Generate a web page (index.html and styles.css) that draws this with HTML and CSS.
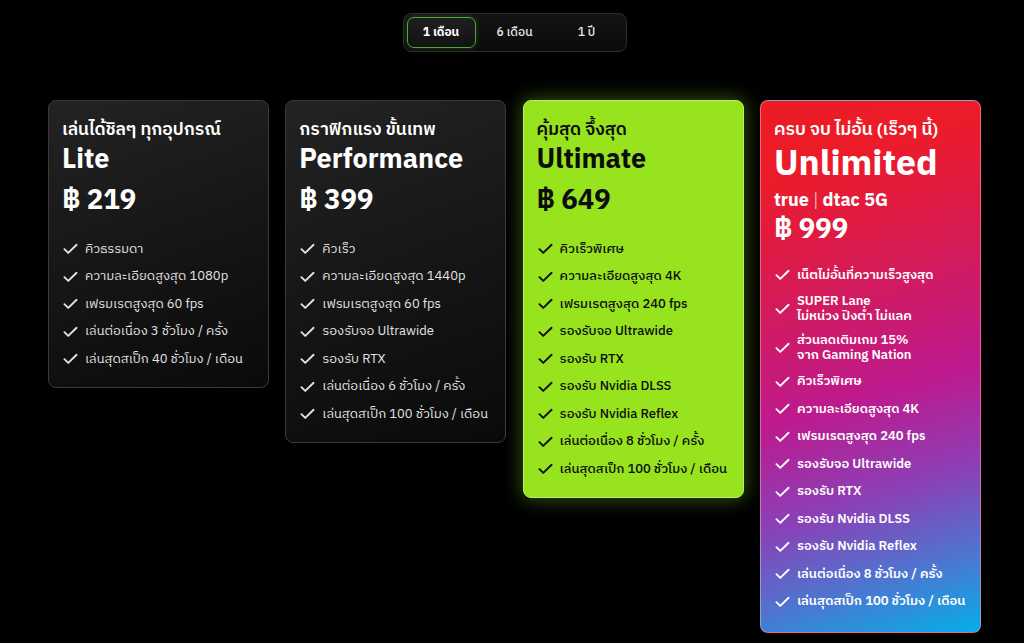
FILE: index.html
```html
<!DOCTYPE html>
<html lang="th">
<head>
<meta charset="utf-8">
<title>Plans</title>
<link rel="stylesheet" href="styles.css">
</head>
<body>
<div class="page">
  <div class="toggle">
    <button class="tab active">1 เดือน</button>
    <button class="tab">6 เดือน</button>
    <button class="tab">1 ปี</button>
  </div>

  <div class="plans">
    <div class="card dark">
      <div class="sub">เล่นได้ชิลๆ ทุกอุปกรณ์</div>
      <div class="name">Lite</div>
      <div class="price">฿ 219</div>
      <ul class="feats">
        <li><svg class="ck" viewBox="0 0 16 12"><path d="M1.5 6.2 5.6 10.2 14.5 1.5"/></svg><span>คิวธรรมดา</span></li>
        <li><svg class="ck" viewBox="0 0 16 12"><path d="M1.5 6.2 5.6 10.2 14.5 1.5"/></svg><span>ความละเอียดสูงสุด 1080p</span></li>
        <li><svg class="ck" viewBox="0 0 16 12"><path d="M1.5 6.2 5.6 10.2 14.5 1.5"/></svg><span>เฟรมเรตสูงสุด 60 fps</span></li>
        <li><svg class="ck" viewBox="0 0 16 12"><path d="M1.5 6.2 5.6 10.2 14.5 1.5"/></svg><span>เล่นต่อเนื่อง 3 ชั่วโมง / ครั้ง</span></li>
        <li><svg class="ck" viewBox="0 0 16 12"><path d="M1.5 6.2 5.6 10.2 14.5 1.5"/></svg><span>เล่นสุดสเป็ก 40 ชั่วโมง / เดือน</span></li>
      </ul>
    </div>

    <div class="card dark">
      <div class="sub">กราฟิกแรง ขั้นเทพ</div>
      <div class="name">Performance</div>
      <div class="price">฿ 399</div>
      <ul class="feats">
        <li><svg class="ck" viewBox="0 0 16 12"><path d="M1.5 6.2 5.6 10.2 14.5 1.5"/></svg><span>คิวเร็ว</span></li>
        <li><svg class="ck" viewBox="0 0 16 12"><path d="M1.5 6.2 5.6 10.2 14.5 1.5"/></svg><span>ความละเอียดสูงสุด 1440p</span></li>
        <li><svg class="ck" viewBox="0 0 16 12"><path d="M1.5 6.2 5.6 10.2 14.5 1.5"/></svg><span>เฟรมเรตสูงสุด 60 fps</span></li>
        <li><svg class="ck" viewBox="0 0 16 12"><path d="M1.5 6.2 5.6 10.2 14.5 1.5"/></svg><span>รองรับจอ Ultrawide</span></li>
        <li><svg class="ck" viewBox="0 0 16 12"><path d="M1.5 6.2 5.6 10.2 14.5 1.5"/></svg><span>รองรับ RTX</span></li>
        <li><svg class="ck" viewBox="0 0 16 12"><path d="M1.5 6.2 5.6 10.2 14.5 1.5"/></svg><span>เล่นต่อเนื่อง 6 ชั่วโมง / ครั้ง</span></li>
        <li><svg class="ck" viewBox="0 0 16 12"><path d="M1.5 6.2 5.6 10.2 14.5 1.5"/></svg><span>เล่นสุดสเป็ก 100 ชั่วโมง / เดือน</span></li>
      </ul>
    </div>

    <div class="card green">
      <div class="sub">คุ้มสุด จึ้งสุด</div>
      <div class="name">Ultimate</div>
      <div class="price">฿ 649</div>
      <ul class="feats">
        <li><svg class="ck" viewBox="0 0 16 12"><path d="M1.5 6.2 5.6 10.2 14.5 1.5"/></svg><span>คิวเร็วพิเศษ</span></li>
        <li><svg class="ck" viewBox="0 0 16 12"><path d="M1.5 6.2 5.6 10.2 14.5 1.5"/></svg><span>ความละเอียดสูงสุด 4K</span></li>
        <li><svg class="ck" viewBox="0 0 16 12"><path d="M1.5 6.2 5.6 10.2 14.5 1.5"/></svg><span>เฟรมเรตสูงสุด 240 fps</span></li>
        <li><svg class="ck" viewBox="0 0 16 12"><path d="M1.5 6.2 5.6 10.2 14.5 1.5"/></svg><span>รองรับจอ Ultrawide</span></li>
        <li><svg class="ck" viewBox="0 0 16 12"><path d="M1.5 6.2 5.6 10.2 14.5 1.5"/></svg><span>รองรับ RTX</span></li>
        <li><svg class="ck" viewBox="0 0 16 12"><path d="M1.5 6.2 5.6 10.2 14.5 1.5"/></svg><span>รองรับ Nvidia DLSS</span></li>
        <li><svg class="ck" viewBox="0 0 16 12"><path d="M1.5 6.2 5.6 10.2 14.5 1.5"/></svg><span>รองรับ Nvidia Reflex</span></li>
        <li><svg class="ck" viewBox="0 0 16 12"><path d="M1.5 6.2 5.6 10.2 14.5 1.5"/></svg><span>เล่นต่อเนื่อง 8 ชั่วโมง / ครั้ง</span></li>
        <li><svg class="ck" viewBox="0 0 16 12"><path d="M1.5 6.2 5.6 10.2 14.5 1.5"/></svg><span>เล่นสุดสเป็ก 100 ชั่วโมง / เดือน</span></li>
      </ul>
    </div>

    <div class="card unl">
      <div class="sub">ครบ จบ ไม่อั้น (เร็วๆ นี้)</div>
      <div class="name big">Unlimited</div>
      <div class="net">true <span class="bar">|</span> dtac 5G</div>
      <div class="price tight">฿ 999</div>
      <ul class="feats">
        <li><svg class="ck" viewBox="0 0 16 12"><path d="M1.5 6.2 5.6 10.2 14.5 1.5"/></svg><span>เน็ตไม่อั้นที่ความเร็วสูงสุด</span></li>
        <li><svg class="ck" viewBox="0 0 16 12"><path d="M1.5 6.2 5.6 10.2 14.5 1.5"/></svg><span>SUPER Lane<br>ไม่หน่วง ปิงต่ำ ไม่แลค</span></li>
        <li><svg class="ck" viewBox="0 0 16 12"><path d="M1.5 6.2 5.6 10.2 14.5 1.5"/></svg><span>ส่วนลดเติมเกม 15%<br>จาก Gaming Nation</span></li>
        <li><svg class="ck" viewBox="0 0 16 12"><path d="M1.5 6.2 5.6 10.2 14.5 1.5"/></svg><span>คิวเร็วพิเศษ</span></li>
        <li><svg class="ck" viewBox="0 0 16 12"><path d="M1.5 6.2 5.6 10.2 14.5 1.5"/></svg><span>ความละเอียดสูงสุด 4K</span></li>
        <li><svg class="ck" viewBox="0 0 16 12"><path d="M1.5 6.2 5.6 10.2 14.5 1.5"/></svg><span>เฟรมเรตสูงสุด 240 fps</span></li>
        <li><svg class="ck" viewBox="0 0 16 12"><path d="M1.5 6.2 5.6 10.2 14.5 1.5"/></svg><span>รองรับจอ Ultrawide</span></li>
        <li><svg class="ck" viewBox="0 0 16 12"><path d="M1.5 6.2 5.6 10.2 14.5 1.5"/></svg><span>รองรับ RTX</span></li>
        <li><svg class="ck" viewBox="0 0 16 12"><path d="M1.5 6.2 5.6 10.2 14.5 1.5"/></svg><span>รองรับ Nvidia DLSS</span></li>
        <li><svg class="ck" viewBox="0 0 16 12"><path d="M1.5 6.2 5.6 10.2 14.5 1.5"/></svg><span>รองรับ Nvidia Reflex</span></li>
        <li><svg class="ck" viewBox="0 0 16 12"><path d="M1.5 6.2 5.6 10.2 14.5 1.5"/></svg><span>เล่นต่อเนื่อง 8 ชั่วโมง / ครั้ง</span></li>
        <li><svg class="ck" viewBox="0 0 16 12"><path d="M1.5 6.2 5.6 10.2 14.5 1.5"/></svg><span>เล่นสุดสเป็ก 100 ชั่วโมง / เดือน</span></li>
      </ul>
    </div>
  </div>
</div>
</body>
</html>
```

FILE: styles.css
```css
* { box-sizing: border-box; }
html, body {
  margin: 0;
  padding: 0;
  background: #000;
  color: #fff;
  font-family: "IBM Plex Sans Thai", "Noto Sans Thai", "Noto Sans", "Liberation Sans", sans-serif;
}
.page {
  width: 1024px;
  height: 643px;
  overflow: hidden;
  padding-top: 13px;
  display: flex;
  flex-direction: column;
  align-items: center;
}
.toggle {
  display: flex;
  padding: 3px;
  margin-left: 5px;
  border: 1px solid #2c2c2c;
  border-radius: 8px;
  background: linear-gradient(180deg, #141414, #0b0b0b);
}
.tab {
  width: 72px;
  height: 31px;
  border: 1.5px solid transparent;
  border-radius: 7px;
  background: transparent;
  color: #e6e6e6;
  font-family: inherit;
  font-size: 12px;
  font-weight: 500;
  padding: 0;
  cursor: pointer;
}
.tab.active {
  width: 69px;
  margin-right: 3px;
  border-color: #4ea83a;
  background: linear-gradient(180deg, #1f1f1f, #121212);
  color: #fff;
  font-weight: 700;
  box-shadow: 0 0 6px rgba(90, 200, 60, 0.25);
}
.plans {
  margin-top: 48px;
  align-self: flex-start;
  margin-left: 48px;
  display: grid;
  grid-template-columns: repeat(4, 221px);
  column-gap: 16.3px;
  align-items: start;
}
.card {
  border-radius: 8px;
  padding: 18px 10px 19px 13px;
}
.card.dark {
  background: linear-gradient(160deg, #232323 0%, #161616 50%, #0a0a0a 100%);
  border: 1px solid #3a3a3a;
}
.card.green {
  background: #97e31e;
  border: 1px solid #b8f06a;
  color: #0c0c0c;
  box-shadow: 0 0 18px 2px rgba(140, 220, 30, 0.35);
}
.card.unl {
  padding-bottom: 21px;
  background: linear-gradient(163deg, #ec1c24 0%, #eb1b2a 14%, #d61b55 33%, #bd1a8f 55%, #8b40b6 72%, #4f74cf 86%, #05aee9 100%);
  border: 1px solid rgba(255, 170, 190, 0.5);
}
.sub {
  font-size: 17.5px;
  font-weight: 600;
  line-height: 22px;
  white-space: nowrap;
}
.name {
  font-size: 27px;
  font-weight: 700;
  line-height: 32px;
  margin-top: 3px;
}
.name.big {
  font-size: 35.5px;
  line-height: 40px;
  margin-top: 4px;
}
.net {
  font-size: 18px;
  font-weight: 700;
  line-height: 22px;
  margin-top: 5px;
}
.net .bar { font-weight: 300; opacity: 0.8; }
.price {
  font-size: 27.5px;
  font-weight: 700;
  line-height: 32px;
  margin-top: 9px;
}
.price.tight { margin-top: 2px; }
.feats {
  list-style: none;
  margin: 23px 0 0;
  padding: 0;
  display: flex;
  flex-direction: column;
  gap: 9.5px;
}
.card.unl .feats { margin-top: 20px; }
.feats li {
  display: flex;
  align-items: center;
  gap: 7px;
  min-height: 18px;
  font-size: 13px;
  line-height: 15px;
  color: #e4e4e4;
  white-space: nowrap;
}
.card.green .feats li { color: #0c0c0c; font-weight: 500; }
.card.unl .feats li { color: #fff; font-weight: 600; }
.ck {
  width: 15px;
  height: 12px;
  flex: none;
  margin-left: 1px;
  fill: none;
  stroke: currentColor;
  stroke-width: 2;
  stroke-linecap: round;
  stroke-linejoin: round;
}
```
